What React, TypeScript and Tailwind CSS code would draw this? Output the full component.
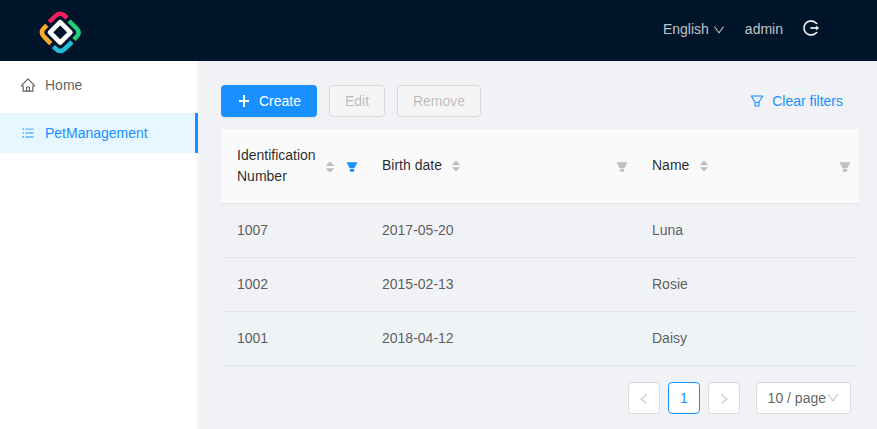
import React from "react";
import {
  AiOutlineHome,
  AiOutlineBars,
  AiOutlineLogout,
  AiOutlineDown,
  AiOutlineFilter,
  AiFillFilter,
  AiOutlineLeft,
  AiOutlineRight,
} from "react-icons/ai";

const VB = "64 64 896 896";

function Logo() {
  return (
    <svg width="44" height="44" viewBox="0 0 44 44" fill="none" strokeWidth="4.5" className="shrink-0">
      <path d="M11.2 12 L17.4 6 Q21.6 2 25.8 5 L29.2 8" stroke="#f91c60" />
      <path d="M31 11 L38.2 18 Q42.4 22.2 39.2 26 L36 29.6" stroke="#23cf7c" />
      <path d="M34 32 L27 38.6 Q23 42.6 19 39.8 L15.4 36.6" stroke="#23bfd9" />
      <path d="M8.8 15.2 L5.4 18.8 Q2.2 22.4 5.8 26.4 L12.8 33.6" stroke="#fbab2c" />
      <path d="M22.2 12.2 L32.4 22.4 L22.2 32.6 L12 22.4 Z" stroke="#fff" strokeWidth="4.7" strokeLinejoin="round" />
    </svg>
  );
}

function Sorter({ className = "" }: { className?: string }) {
  return (
    <svg width="8" height="12" viewBox="0 0 8 12" fill="#bfbfbf" className={`shrink-0 ${className}`}>
      <path d="M4 .4 8 4.6 7.8 5H.2L0 4.6Z" />
      <path d="M4 11.8 8 7.6 7.8 7.2H.2L0 7.6Z" />
    </svg>
  );
}

const rows = [
  ["1007", "2017-05-20", "Luna"],
  ["1002", "2015-02-13", "Rosie"],
  ["1001", "2018-04-12", "Daisy"],
];

const grid = "grid grid-cols-[145px_270px_223px] border-b border-[#e4e6e9]";

export default function App() {
  return (
    <div className="flex h-[429px] w-[877px] flex-col overflow-hidden bg-[#f0f2f5] font-['Liberation_Sans',Arial,sans-serif] text-[14px] leading-[21px] text-black/65">
      <header className="flex h-[61px] shrink-0 items-start justify-between bg-[#001529] pl-[38px] pr-[58px] text-white/75">
        <div className="pt-[10px]"><Logo /></div>
        <div className="flex h-[58px] items-center">
          <span>English</span>
          <AiOutlineDown size={12} viewBox={VB} className="ml-1 mt-[2px]" />
          <span className="ml-5">admin</span>
          <AiOutlineLogout size={16} viewBox={VB} className="-mt-[2px] ml-5 text-white" stroke="currentColor" strokeWidth="10" />
        </div>
      </header>
      <div className="flex min-h-0 flex-1">
        <aside className="w-[197px] shrink-0 bg-white pt-1">
          <nav className="flex flex-col gap-2">
            <a className="flex h-10 items-center pl-[21px]">
              <AiOutlineHome size={14} viewBox={VB} />
              <span className="ml-[10px]">Home</span>
            </a>
            <a className="flex h-10 w-[198px] items-center border-r-[3px] border-[#1890ff] bg-[#e6f7ff] pl-[21px] text-[#1890ff]">
              <AiOutlineBars size={14} viewBox="0 0 1024 1024" />
              <span className="ml-[10px]">PetManagement</span>
            </a>
          </nav>
        </aside>
        <main className="flex flex-1 flex-col pl-6 pr-[18px] pt-6">
          <div className="flex h-8 items-center gap-3">
            <button className="flex h-8 w-24 items-center rounded bg-[#1890ff] pl-4 text-white shadow-[0_2px_0_rgba(0,0,0,0.045)]">
              <svg width="14" height="14" viewBox="0 0 14 14" fill="currentColor" shapeRendering="crispEdges">
                <path d="M6 1h2v12H6zM2 6h10v2H2z" />
              </svg>
              <span className="ml-2">Create</span>
            </button>
            <button className="h-8 w-14 rounded border border-[#d9d9d9] bg-[#f5f5f5] text-black/25">Edit</button>
            <button className="h-8 w-[84px] rounded border border-[#d9d9d9] bg-[#f5f5f5] text-black/25">Remove</button>
            <button className="ml-auto mr-4 flex items-center text-[#1890ff]">
              <AiOutlineFilter size={14} viewBox={VB} />
              <span className="ml-2">Clear filters</span>
            </button>
          </div>
          <div className="mt-3 w-[638px]">
            <div className={`${grid} h-[75px] rounded-t bg-[#fafafa] text-black/85`}>
              <div className="flex items-center pl-4">
                <span className="w-[83px]">Identification Number</span>
                <Sorter className="ml-[6px] mt-[2px]" />
                <AiFillFilter size={12} viewBox={VB} className="ml-3 mt-[2px] text-[#1890ff]" />
              </div>
              <div className="flex items-center pl-4 pr-[8px]">
                <span className="-mt-px">Birth date</span>
                <Sorter className="ml-[10px]" />
                <AiFillFilter size={12} viewBox={VB} className="ml-auto mt-[2px] text-[#bfbfbf]" />
              </div>
              <div className="flex items-center pl-4 pr-[8px]">
                <span className="-mt-px">Name</span>
                <Sorter className="ml-[10.6px]" />
                <AiFillFilter size={12} viewBox={VB} className="ml-auto mt-[2px] text-[#bfbfbf]" />
              </div>
            </div>
            {rows.map((r, i) => (
              <div key={r[0]} className={`${grid} h-[54px] items-center ${i === 2 ? "bg-[#eef3f6]" : ""}`}>
                {r.map((c) => (
                  <span key={c} className="pl-4">{c}</span>
                ))}
              </div>
            ))}
          </div>
          <div className="mt-4 flex gap-2 pl-[407px]">
            <button className="flex size-8 items-center justify-center rounded border border-[#d9d9d9] bg-white pt-[2px] text-black/25">
              <AiOutlineLeft size={12} viewBox={VB} />
            </button>
            <button className="size-8 rounded border border-[#1890ff] bg-white text-[#1890ff]">1</button>
            <button className="flex size-8 items-center justify-center rounded border border-[#d9d9d9] bg-white pt-[2px] text-black/25">
              <AiOutlineRight size={12} viewBox={VB} />
            </button>
            <div className="ml-2 flex h-8 w-[95px] items-center rounded border border-[#d9d9d9] bg-white pl-[11px]">
              <span className="-ml-[0.4px] whitespace-nowrap">10 / page</span>
              <AiOutlineDown size={12} viewBox={VB} className="ml-px shrink-0 text-black/25" />
            </div>
          </div>
        </main>
      </div>
    </div>
  );
}
